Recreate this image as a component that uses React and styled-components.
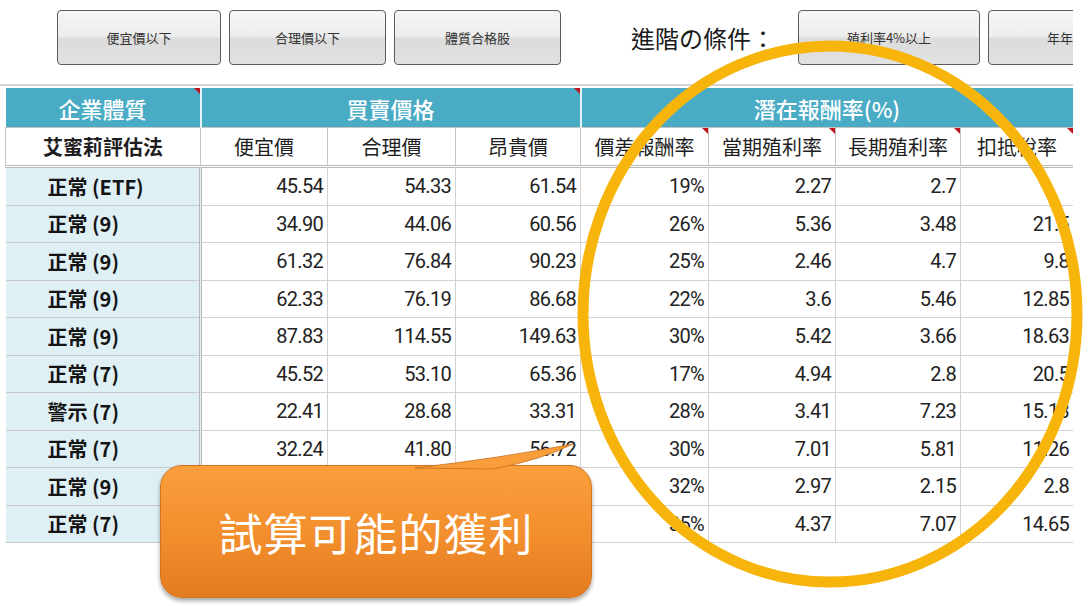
import React from 'react';
import styled, { createGlobalStyle } from 'styled-components';

const CJK = '"Noto Sans CJK TC", "Noto Sans", sans-serif';
const NUM = 'Roboto, "Noto Sans", "Noto Sans CJK TC", sans-serif';

const GlobalStyle = createGlobalStyle`
  html, body {
    margin: 0;
    padding: 0;
    background: #fff;
  }
  body {
    font-family: ${CJK};
    color: #1e1e1e;
  }
`;

const Page = styled.div`
  position: relative;
  width: 1091px;
  height: 614px;
  overflow: hidden;
  background: #fff;
`;

const Sheet = styled.div`
  width: 1073px;
  overflow: hidden;
`;

const Toolbar = styled.div`
  display: flex;
  align-items: center;
  gap: 8px;
  height: 55px;
  padding: 10px 0 0 57px;
  white-space: nowrap;
`;

const ToolButton = styled.button`
  flex: none;
  width: ${({ $w }) => $w}px;
  height: 55px;
  margin-left: ${({ $ml }) => $ml || 0}px;
  padding: 0;
  border: 1px solid #5c5c5c;
  border-radius: 4px;
  background: linear-gradient(#f6f6f6 0%, #ededed 48%, #dcdcdc 52%, #e1e1e1 100%);
  font-family: ${CJK};
  font-size: 13px;
  color: #333;
  text-align: center;
`;

const Label = styled.span`
  flex: none;
  margin-left: 62px;
  font-family: ${CJK};
  font-size: 24px;
  color: #1a1a1a;
`;

const Rule = styled.div`
  height: 2px;
  margin-top: 19px;
  background: #d3d3d3;
`;

const Grid = styled.table`
  margin: 2px 0 0 5px;
  width: 1068px;
  border-collapse: collapse;
  table-layout: fixed;
`;

const noteMark = `
  &::after {
    content: '';
    position: absolute;
    top: 0;
    right: 0;
    border-style: solid;
    border-width: 0 6px 6px 0;
    border-color: transparent #c0141c transparent transparent;
  }
`;

const GroupCell = styled.th`
  position: relative;
  height: 39px;
  padding: 0;
  background: #4aabc5;
  border-right: 2px solid #e4f2f6;
  color: #fff;
  font-family: ${CJK};
  font-size: 22px;
  font-weight: 500;
  text-align: center;

  ${({ $note }) => $note && noteMark}
`;

const SubCell = styled.th`
  position: relative;
  height: 37px;
  padding: 0;
  background: #fff;
  border: 1px solid #c4c4c4;
  border-bottom: 3px double #b8b8b8;
  color: #1e1e1e;
  font-family: ${CJK};
  font-size: 20px;
  font-weight: ${({ $bold }) => ($bold ? 700 : 400)};
  text-align: center;

  ${({ $note }) => $note && noteMark}
`;

const NameCell = styled.td`
  height: 36.5px;
  padding: 0 0 0 42px;
  background: #dff0f5;
  border-bottom: 1px solid #c9c9c9;
  border-right: 3px double #b8b8b8;
  font-family: ${CJK};
  font-size: 20px;
  font-weight: 700;
  color: #141414;
  white-space: nowrap;
`;

const ValueCell = styled.td`
  height: 36.5px;
  padding: 0 4px 0 0;
  border: 1px solid #d2d2d2;
  font-family: ${NUM};
  font-size: 20px;
  letter-spacing: -0.7px;
  color: #222;
  text-align: right;
  white-space: nowrap;
`;

const Callout = styled.div`
  position: absolute;
  left: 160px;
  top: 465px;
  width: 432px;
  height: 133px;
  display: flex;
  align-items: center;
  justify-content: center;
  border: 1px solid #d27420;
  border-radius: 22px;
  box-sizing: border-box;
  background: linear-gradient(#fa9f3c 0%, #f28d2c 55%, #e27b20 100%);
  box-shadow: 0 3px 4px rgba(0, 0, 0, 0.35);
  color: #fff;
  font-family: ${CJK};
  font-size: 44px;
  font-weight: 400;
  letter-spacing: 1px;
`;

const Tail = styled.svg`
  position: absolute;
  left: 0;
  top: -26px;
  overflow: visible;
`;

const Ring = styled.svg`
  position: absolute;
  left: 0;
  top: 0;
  pointer-events: none;
`;

const buttons = [
  { text: '便宜價以下', w: 164 },
  { text: '合理價以下', w: 157 },
  { text: '體質合格股', w: 167 },
];

// the price cells of the last two rows sit under the callout
const rows = [
  ['正常 (ETF)', '45.54', '54.33', '61.54', '19%', '2.27', '2.7', ''],
  ['正常 (9)', '34.90', '44.06', '60.56', '26%', '5.36', '3.48', '21.5'],
  ['正常 (9)', '61.32', '76.84', '90.23', '25%', '2.46', '4.7', '9.8'],
  ['正常 (9)', '62.33', '76.19', '86.68', '22%', '3.6', '5.46', '12.85'],
  ['正常 (9)', '87.83', '114.55', '149.63', '30%', '5.42', '3.66', '18.63'],
  ['正常 (7)', '45.52', '53.10', '65.36', '17%', '4.94', '2.8', '20.5'],
  ['警示 (7)', '22.41', '28.68', '33.31', '28%', '3.41', '7.23', '15.13'],
  ['正常 (7)', '32.24', '41.80', '56.72', '30%', '7.01', '5.81', '11.26'],
  ['正常 (9)', '', '', '', '32%', '2.97', '2.15', '2.8'],
  ['正常 (7)', '', '', '', '35%', '4.37', '7.07', '14.65'],
];

const subHeads = [
  { text: '便宜價' },
  { text: '合理價' },
  { text: '昂貴價' },
  { text: '價差報酬率', note: true },
  { text: '當期殖利率', note: true },
  { text: '長期殖利率', note: true },
  { text: '扣抵稅率', note: true },
];

const widths = [195, 127, 128, 125, 128, 127, 125, 113];

export default function App() {
  return (
    <Page>
      <GlobalStyle />
      <Sheet>
        <Toolbar>
          {buttons.map((b) => (
            <ToolButton key={b.text} $w={b.w}>{b.text}</ToolButton>
          ))}
          <Label>進階の條件：</Label>
          <ToolButton $w={182} $ml={15}>殖利率4%以上</ToolButton>
          <ToolButton $w={170}>年年配息</ToolButton>
        </Toolbar>
        <Rule />
        <Grid>
          <colgroup>
            {widths.map((w, i) => <col key={i} style={{ width: w }} />)}
          </colgroup>
          <thead>
            <tr>
              <GroupCell $note>企業體質</GroupCell>
              <GroupCell colSpan={3} $note>買賣價格</GroupCell>
              <GroupCell colSpan={4}>潛在報酬率(%)</GroupCell>
            </tr>
            <tr>
              <SubCell $bold>艾蜜莉評估法</SubCell>
              {subHeads.map((h) => (
                <SubCell key={h.text} $note={h.note}>{h.text}</SubCell>
              ))}
            </tr>
          </thead>
          <tbody>
            {rows.map((r, i) => (
              <tr key={i}>
                <NameCell>{r[0]}</NameCell>
                {r.slice(1).map((v, j) => <ValueCell key={j}>{v}</ValueCell>)}
              </tr>
            ))}
          </tbody>
        </Grid>
      </Sheet>

      <Ring width="1091" height="614" viewBox="0 0 1091 614">
        <ellipse cx="830" cy="314" rx="247" ry="268" fill="none" stroke="#f7b50c" strokeWidth="11" />
      </Ring>

      <Callout>
        <Tail width="432" height="30" viewBox="0 0 432 30">
          <path d="M254 28 Q340 18 412 4 Q380 20 332 29 Z" fill="#f99e3b" stroke="#c8701c" strokeWidth="0.8" />
        </Tail>
        試算可能的獲利
      </Callout>
    </Page>
  );
}
